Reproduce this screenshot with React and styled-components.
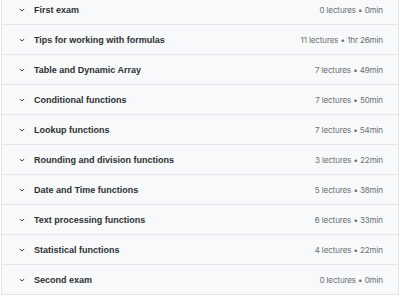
import React from "react";
import styled, { createGlobalStyle } from "styled-components";

const Global = createGlobalStyle`
  html, body { margin: 0; padding: 0; background: #ffffff; }
  body { font-family: "Liberation Sans", Arial, sans-serif; overflow: hidden; }
`;

const List = styled.div`
  margin: -6px 1px 0 1px;
  border: 1px solid #e3e6e9;
  display: flex;
  flex-direction: column;
`;

const Row = styled.div`
  height: 29px;
  display: flex;
  align-items: center;
  padding: 0 15px 0 17px;
  background: #f7f9fa;
  border-top: ${(p) => (p.$first ? "none" : "1px solid #e3e6e9")};
`;

const Chevron = styled.svg`
  width: 6px;
  height: 4px;
  flex: none;
  margin-right: 9px;
`;

const Title = styled.span`
  flex: 1;
  font-size: 9px;
  font-weight: 700;
  color: #2d2f31;
  white-space: nowrap;
`;

const Meta = styled.span`
  font-family: Inter, "Liberation Sans", sans-serif;
  font-size: 8px;
  letter-spacing: -0.1px;
  color: #6a6f73;
  white-space: nowrap;
`;

const sections = [
  ["First exam", "0 lectures • 0min"],
  ["Tips for working with formulas", "11 lectures • 1hr 26min"],
  ["Table and Dynamic Array", "7 lectures • 49min"],
  ["Conditional functions", "7 lectures • 50min"],
  ["Lookup functions", "7 lectures • 54min"],
  ["Rounding and division functions", "3 lectures • 22min"],
  ["Date and Time functions", "5 lectures • 38min"],
  ["Text processing functions", "6 lectures • 33min"],
  ["Statistical functions", "4 lectures • 22min"],
  ["Second exam", "0 lectures • 0min"],
];

export default function App() {
  return (
    <>
      <Global />
      <List>
        {sections.map(([t, m], i) => (
          <Row key={t} $first={i === 0}>
            <Chevron viewBox="0 0 6 4">
              <path d="M0.8 1 L3 3 L5.2 1" fill="none" stroke="#2d2f31" strokeWidth="0.9" />
            </Chevron>
            <Title>{t}</Title>
            <Meta>{m}</Meta>
          </Row>
        ))}
      </List>
    </>
  );
}
